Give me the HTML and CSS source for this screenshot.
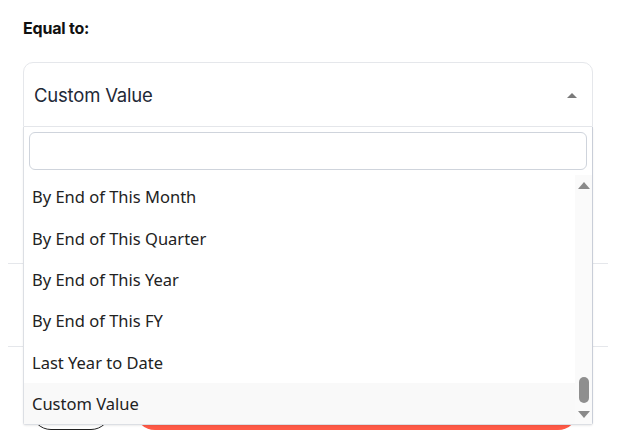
FILE: index.html
```html
<!DOCTYPE html>
<html lang="en">
<head>
<meta charset="utf-8">
<title>Equal to</title>
<link rel="stylesheet" href="styles.css">
</head>
<body>
<div class="page">
  <div class="field">
    <div class="label">Equal to:</div>
    <div class="select-wrap">
      <div class="select">
        <span class="select-value">Custom Value</span>
        <span class="caret"></span>
      </div>
      <div class="dropdown">
        <div class="search"></div>
        <div class="list">
          <ul class="options">
            <li class="option">By End of This Month</li>
            <li class="option">By End of This Quarter</li>
            <li class="option">By End of This Year</li>
            <li class="option">By End of This FY</li>
            <li class="option">Last Year to Date</li>
            <li class="option selected">Custom Value</li>
          </ul>
          <div class="scrollbar">
            <span class="arrow-up"></span>
            <span class="thumb"></span>
            <span class="arrow-down"></span>
          </div>
        </div>
      </div>
    </div>
  </div>
  <div class="section section-a"></div>
  <div class="section section-b"></div>
  <div class="footer">
    <div class="btn-outline"></div>
    <div class="btn-primary"></div>
  </div>
</div>
</body>
</html>
```
FILE: styles.css
```css
* { box-sizing: border-box; }
html, body { margin: 0; padding: 0; background: #fff; }
body { font-family: Inter, Roboto, "Liberation Sans", sans-serif; color: #111827; }

.page {
  width: 617px;
  height: 436px;
  padding: 0 9px 0 8px;
  overflow: hidden;
}

.field {
  padding: 18px 15px 0;
  height: 264px;
  border-bottom: 1px solid #e5e7eb;
}

.label {
  font-size: 16px;
  line-height: 20px;
  font-weight: 700;
  color: #111;
  letter-spacing: -0.2px;
  margin-bottom: 24px;
}

.select-wrap { position: relative; }

.select {
  height: 65px;
  display: flex;
  align-items: center;
  justify-content: space-between;
  padding: 0 15px 0 10px;
  border: 1px solid #e5e7eb;
  border-radius: 10px 10px 0 0;
  background: #fff;
}

.select-value {
  font-size: 18.5px;
  color: #1f2937;
  letter-spacing: -0.2px;
  padding-top: 1px;
}

.caret {
  width: 0;
  height: 0;
  border-left: 5px solid transparent;
  border-right: 5px solid transparent;
  border-bottom: 5px solid #7a7a7a;
  margin-top: 1px;
}

.dropdown {
  position: absolute;
  top: 100%;
  left: 0;
  right: 0;
  height: 298px;
  background: #fff;
  border: 1px solid #dcdfe4;
  border-top: none;
  border-right-color: #c9ced8;
  border-radius: 0 0 3px 3px;
  box-shadow: 0 1px 2px rgba(0,0,0,0.08);
  z-index: 2;
  display: flex;
  flex-direction: column;
}

.search {
  margin: 5px 5px 0;
  height: 38px;
  border: 1px solid #cfd4dc;
  border-radius: 6px;
  background: #fff;
}

.list {
  margin-top: 5px;
  flex: 1;
  display: flex;
  overflow: hidden;
}

.options {
  list-style: none;
  margin: 0;
  padding: 1px 0 0;
  flex: 1;
}

.option {
  height: 41.4px;
  display: flex;
  align-items: center;
  padding-left: 8px;
  font-family: "Noto Sans", "Open Sans", sans-serif;
  font-size: 16.5px;
  color: #222;
}

.option.selected { background: #f9f9f9; }

.scrollbar {
  width: 17px;
  background: #fafafa;
  display: flex;
  flex-direction: column;
  align-items: center;
  padding: 7px 0 6px;
}

.arrow-up {
  width: 0; height: 0;
  border-left: 6px solid transparent;
  border-right: 6px solid transparent;
  border-bottom: 7px solid #8a8a8a;
}

.thumb {
  margin-top: auto;
  width: 10px;
  height: 26px;
  border-radius: 5px;
  background: #8f8f8f;
}

.arrow-down {
  margin-top: 8px;
  width: 0; height: 0;
  border-left: 6px solid transparent;
  border-right: 6px solid transparent;
  border-top: 7px solid #8a8a8a;
}

.section-b {
  height: 83px;
  border-bottom: 1px solid #e5e7eb;
}

.footer {
  display: flex;
  gap: 24px;
  padding: 43px 0 0 23px;
}

.btn-outline {
  width: 80px;
  height: 40px;
  border: 1.5px solid #222;
  border-radius: 20px;
}

.btn-primary {
  width: 443px;
  height: 40px;
  background: #ff5a47;
  border-radius: 20px;
}
```
